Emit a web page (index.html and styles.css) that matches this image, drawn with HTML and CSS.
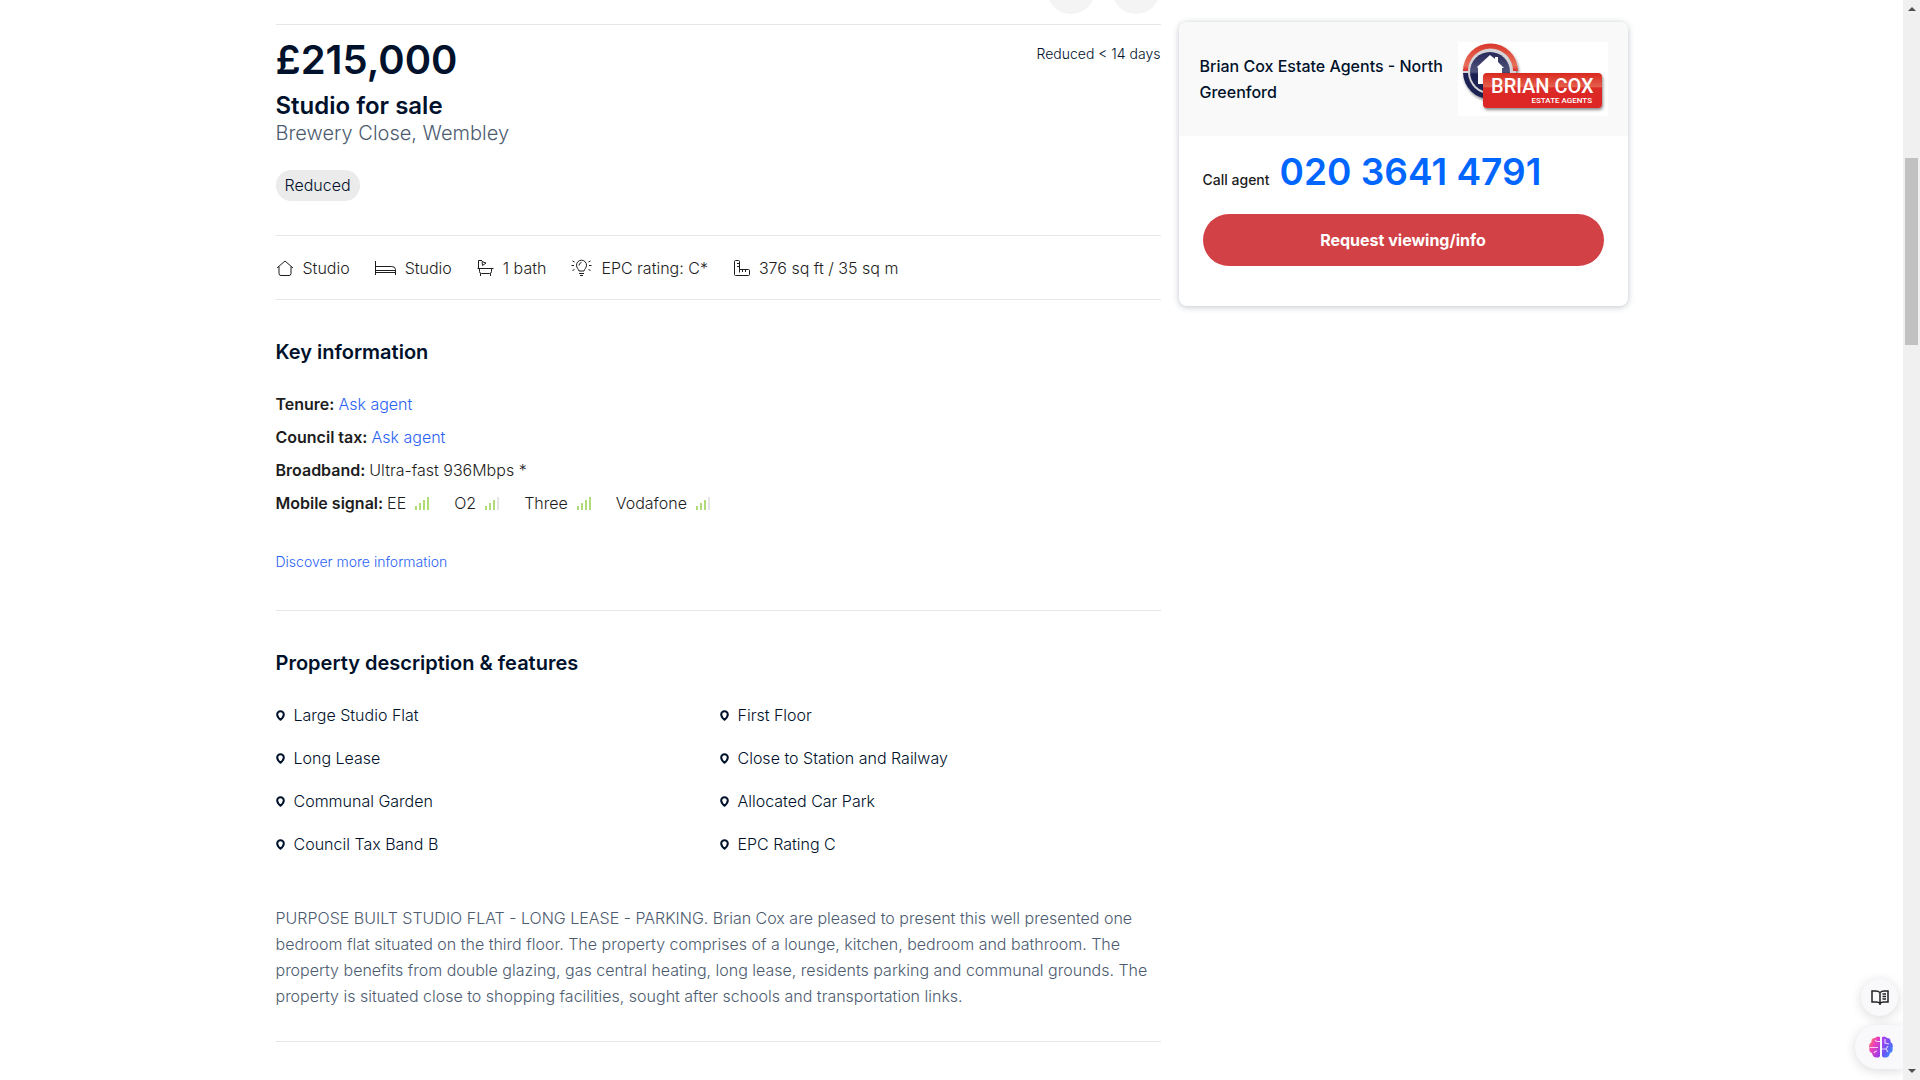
FILE: index.html
```html
<!DOCTYPE html>
<html lang="en">
<head>
<meta charset="utf-8">
<meta name="viewport" content="width=device-width, initial-scale=1">
<title>Studio for sale, Brewery Close, Wembley</title>
<link rel="stylesheet" href="styles.css">
</head>
<body>
<svg class="defs" aria-hidden="true">
  <symbol id="pin" viewBox="0 0 9 11"><path d="M4.500 1.200C2.600 1.200 1.200 2.600 1.200 4.400c0 2 1.700 3.900 3.300 5.300 1.600-1.400 3.300-3.300 3.300-5.300C7.800 2.600 6.400 1.200 4.500 1.200z" fill="none" stroke="currentColor" stroke-width="2" stroke-linejoin="round"/></symbol>
  <symbol id="signal-full" viewBox="0 0 15 13"><path d="M0 9h2v4H0zM4 6h2v7H4zM8 3h2v10H8zM12 0h2v13h-2z" fill="#b0dc78"/></symbol>
  <symbol id="signal-three" viewBox="0 0 15 13"><path d="M0 9h2v4H0zM4 6h2v7H4zM8 3h2v10H8z" fill="#b0dc78"/><path d="M12 0h2v13h-2z" fill="#e2e4e6"/></symbol>
</svg>
<div class="page">
  <div class="layout">
    <main class="listing">
      <div class="actions">
        <button class="round" type="button" aria-label="Share"></button>
        <button class="round" type="button" aria-label="Save"></button>
      </div>
      <header class="summary">
        <div>
          <p class="price">£215,000</p>
          <h1 class="title">Studio for sale</h1>
          <p class="address">Brewery Close, Wembley</p>
          <span class="pill">Reduced</span>
        </div>
        <p class="when">Reduced &lt; 14 days</p>
      </header>
      <ul class="facts">
        <li><svg width="18" height="18" viewBox="0 0 18 18"><path d="M1 9l8-7 8 7M3 7.500v7q0 2 2 2h8q2 0 2-2v-7"/></svg>Studio</li>
        <li><svg width="21" height="18" viewBox="0 0 21 18"><path d="M.500 2v14M.500 7.500h16q4 0 4 3v5.500M.500 11.500h20M.500 13.500h20"/></svg>Studio</li>
        <li><svg width="17" height="18" viewBox="0 0 17 18"><path d="M.500 9.500h16M1.500 9.500v-8h3.500M5 2.500l4 1.500-3.500 2.500zM2.500 9.500v3q0 2 2 2h8q2 0 2-2v-3M3.500 14.500V17M13.500 14.500V17"/></svg>1 bath</li>
        <li><svg width="21" height="18" viewBox="0 0 21 18"><path d="M8 12C7.500 9.800 5.500 9 5.500 6.200a5 5 0 0 1 10 0C15.500 9 13.500 9.800 13 12zM8 14.500h5M9 16.500h3M8 6.500q0-2.500 2.500-3M1.500 2l2 1M.500 6.500h2.500M1.500 11.500l2-1M19.500 2l-2 1M20.500 6.500H18M19.500 11.500l-2-1"/></svg>EPC rating: C*</li>
        <li><svg width="17" height="18" viewBox="0 0 17 18"><path d="M1.500 2.500q0-1 1-1h3q1 0 1 1v8h9q1 0 1 1v4q0 1-1 1h-13q-1 0-1-1zM6.500 4.500H4M6.500 7.500H4M6.500 10.500v3M9.500 10.500V13M12.500 10.500V13"/></svg>376 sq ft / 35 sq m</li>
      </ul>
      <section class="block info">
        <h2>Key information</h2>
        <dl>
          <div><dt>Tenure:</dt><dd><a href="#agent">Ask agent</a></dd></div>
          <div><dt>Council tax:</dt><dd><a href="#agent">Ask agent</a></dd></div>
          <div><dt>Broadband:</dt><dd>Ultra-fast 936Mbps *</dd></div>
          <div><dt>Mobile signal:</dt><dd class="signals">
            <span>EE<svg width="15" height="13"><use href="#signal-full"/></svg></span>
            <span>O2<svg width="15" height="13"><use href="#signal-three"/></svg></span>
            <span>Three<svg width="15" height="13"><use href="#signal-full"/></svg></span>
            <span>Vodafone<svg width="15" height="13"><use href="#signal-three"/></svg></span>
          </dd></div>
        </dl>
        <a class="more" href="#more">Discover more information</a>
      </section>
      <section class="block">
        <h2>Property description &amp; features</h2>
        <ul class="features">
          <li><svg width="9" height="11"><use href="#pin"/></svg>Large Studio Flat</li>
          <li><svg width="9" height="11"><use href="#pin"/></svg>First Floor</li>
          <li><svg width="9" height="11"><use href="#pin"/></svg>Long Lease</li>
          <li><svg width="9" height="11"><use href="#pin"/></svg>Close to Station and Railway</li>
          <li><svg width="9" height="11"><use href="#pin"/></svg>Communal Garden</li>
          <li><svg width="9" height="11"><use href="#pin"/></svg>Allocated Car Park</li>
          <li><svg width="9" height="11"><use href="#pin"/></svg>Council Tax Band B</li>
          <li><svg width="9" height="11"><use href="#pin"/></svg>EPC Rating C</li>
        </ul>
        <p class="description">PURPOSE BUILT STUDIO FLAT - LONG LEASE - PARKING. Brian Cox are pleased to present this well presented one bedroom flat situated on the third floor. The property comprises of a lounge, kitchen, bedroom and bathroom. The property benefits from double glazing, gas central heating, long lease, residents parking and communal grounds. The property is situated close to shopping facilities, sought after schools and transportation links.</p>
      </section>
    </main>
    <aside class="agent" id="agent">
      <div class="agent-head">
        <h2>Brian Cox Estate Agents - North Greenford</h2>
        <svg class="logo" width="150" height="74" viewBox="0 0 150 74" role="img" aria-label="Brian Cox Estate Agents">
          <defs>
            <linearGradient id="plate" x1="0" y1="0" x2="0" y2="1"><stop offset="0" stop-color="#d9281f"/><stop offset=".4" stop-color="#e4604c"/><stop offset=".42" stop-color="#dc2a28"/><stop offset="1" stop-color="#dd2528"/></linearGradient>
            <linearGradient id="ring" x1="0" y1="0" x2="0" y2="1"><stop offset="0" stop-color="#d9382c"/><stop offset=".8" stop-color="#e8705a"/><stop offset="1" stop-color="#dc2a28"/></linearGradient>
            <linearGradient id="disc" x1="0" y1="0" x2="0" y2="1"><stop offset="0" stop-color="#262a58"/><stop offset=".5" stop-color="#50547c"/><stop offset=".55" stop-color="#1c2252"/><stop offset="1" stop-color="#1c2252"/></linearGradient>
            <filter id="shade" x="-10%" y="-10%" width="125%" height="135%"><feDropShadow dx="1" dy="2" stdDeviation="1.500" flood-opacity=".45"/></filter>
          </defs>
          <path d="M0 0h150v74H0z" fill="#fff"/>
          <g filter="url(#shade)">
            <circle cx="32" cy="30" r="26" fill="#d4d4d8"/>
            <path d="M5 29a27 27 0 0 1 55 0h-5a22 22 0 0 0-45 0z" fill="url(#ring)"/>
            <path d="M5 31a27 27 0 0 0 27 26v-5a22 22 0 0 1-22-21z" fill="#1c2252"/>
            <circle cx="32" cy="30" r="20" fill="url(#disc)"/>
          </g>
          <path d="M19 25l13-12 5 4v-2h3v5l6 6h-2v16H20V26z" fill="#fff"/>
          <rect x="25" y="31" width="119" height="35" rx="4" fill="url(#plate)" filter="url(#shade)"/>
          <text class="logo-name" x="33" y="51">BRIAN COX</text>
          <text class="logo-sub" x="134" y="61" text-anchor="end">ESTATE AGENTS</text>
        </svg>
      </div>
      <div class="agent-body">
        <p class="call"><span>Call agent</span> <a href="tel:02036414791">020 3641 4791</a></p>
        <button class="request" type="button">Request viewing/info</button>
      </div>
    </aside>
  </div>
</div>
<div class="floating">
  <button class="reader" type="button" aria-label="Reader"><svg width="18" height="16" viewBox="0 0 18 16" fill="none" stroke="#222" stroke-width="1.500"><path d="M9 2.500Q7 1 5 1H1v11h4.500q2 0 3.500 1.500Q10.500 12 12.500 12H17V1h-4Q11 1 9 2.500zV15M11.500 4H15M11.500 6.500H15M11.500 9H15"/></svg></button>
  <button class="brain" type="button" aria-label="Assistant"><svg width="24" height="22" viewBox="0 0 24 22">
    <defs><linearGradient id="bl" x1="0" y1="0" x2="1" y2="1"><stop offset="0" stop-color="#ff9a2e"/><stop offset=".4" stop-color="#f040b8"/><stop offset="1" stop-color="#8a3cf4"/></linearGradient><linearGradient id="br" x1="0" y1="0" x2="1" y2="1"><stop offset="0" stop-color="#b83cf0"/><stop offset=".5" stop-color="#6a55f5"/><stop offset="1" stop-color="#22a8ff"/></linearGradient></defs>
    <path d="M11 1Q8-.500 6 2 2 2 2.500 6-1 8 .500 12-.500 16 3 17q1 5 5 4.500Q10 22 11 20z" fill="url(#bl)"/>
    <path d="M13 1q3-1.500 5 1 4 0 3.500 4 3.500 2 2 6 1 4-2.500 5-1 5-5 4.500Q14 22 13 20z" fill="url(#br)"/>
    <path d="M11 5.500H8Q7 5.500 6 4M1 11.500h8M5 17q1-2 3-2M16 3v4l4 1M13 13h4l2-3M17 13l2 3" fill="none" stroke="#fff" stroke-opacity=".75" stroke-width="1.200"/></svg></button>
</div>
<div class="scrollbar" aria-hidden="true"><i class="arrow up"></i><i class="thumb"></i><i class="arrow down"></i></div>
</body>
</html>
```
FILE: styles.css
```css
* { box-sizing: border-box; margin: 0; padding: 0; }
html, body { height: 100%; overflow: hidden; }
body {
  font: 300 16px/26px Inter, "Open Sans", sans-serif;
  color: #1d1d1d;
  background: #fff;
}
ul { list-style: none; }
a { color: #2b63f5; text-decoration: none; }
button { border: 0; font: inherit; cursor: pointer; }
.defs { position: absolute; width: 0; height: 0; }
.page { padding-right: 17px; }
.layout {
  display: grid;
  grid-template-columns: minmax(0, 1fr) 449px;
  gap: 18px;
  align-items: start;
  max-width: 1352px;
  margin: 0 auto;
}
.actions {
  display: flex;
  justify-content: flex-end;
  align-items: flex-end;
  gap: 17px;
  height: 24px;
  padding: 0 1px 10px 0;
  overflow: hidden;
}
.round { flex: none; width: 48px; height: 48px; border-radius: 50%; background: #f4f4f4; }
.summary {
  display: flex;
  justify-content: space-between;
  border-top: 1px solid #e5e6e8;
  padding: 11px 0 34px;
  color: #00112b;
}
.price { font-size: 40px; line-height: 48px; font-weight: 600; }
.title { font-size: 24px; line-height: 30px; font-weight: 600; margin-top: 7px; }
.address { font-size: 20px; line-height: 24px; color: #4d5b70; }
.pill {
  display: inline-block;
  margin-top: 25px;
  padding: 0 9px;
  border-radius: 16px;
  background: #ebebeb;
  line-height: 31px;
}
.when { font-size: 14px; line-height: 20px; margin-top: 8px; }
.facts {
  display: flex;
  gap: 25px;
  padding: 19px 0 18px;
  border-top: 1px solid #e5e6e8;
  border-bottom: 1px solid #e5e6e8;
}
.facts li { display: flex; align-items: center; gap: 9px; }
.facts svg { fill: none; stroke: #1d1d1d; stroke-width: 1; stroke-linejoin: round; }
.block { padding: 38px 0 32px; border-bottom: 1px solid #e5e6e8; }
.info { padding-bottom: 36px; }
.block h2 { font-size: 20px; line-height: 28px; font-weight: 600; color: #00112b; }
dl { margin-top: 22px; }
dl > div { display: flex; gap: 4px; line-height: 33px; }
dt { font-weight: 600; }
.signals { display: flex; gap: 24px; }
.signals span { display: flex; align-items: center; gap: 9px; }
.more { display: block; margin-top: 30px; font-size: 14px; line-height: 24px; }
.features {
  display: grid;
  grid-template-columns: 1fr 1fr;
  gap: 17px 3px;
  margin-top: 25px;
  color: #00112b;
}
.features li { display: flex; align-items: center; gap: 9px; }
.description { margin-top: 48px; color: #4d5b70; }
.agent {
  margin-top: 22px;
  border-radius: 8px;
  background: #fff;
  box-shadow: 0 1px 6px rgba(40, 60, 80, .3);
  overflow: hidden;
}
.agent-head {
  display: flex;
  align-items: center;
  justify-content: space-between;
  padding: 20px 20px 20px 21px;
  background: #f9f9f9;
}
.agent-head h2 { flex: 1; font-size: 16px; line-height: 26px; font-weight: 500; color: #00112b; }
.logo { flex: none; }
.logo-name { font: 500 20px Roboto, sans-serif; fill: #fff; }
.logo-sub { font: 500 8px Roboto, sans-serif; fill: #fff; }
.agent-body { padding: 12px 24px 40px; }
.call { display: flex; align-items: baseline; gap: 10px; font-size: 14px; font-weight: 500; }
.call a { font-size: 37px; line-height: 48px; font-weight: 600; color: #06f; }
.request {
  width: 100%;
  height: 52px;
  margin-top: 18px;
  border-radius: 26px;
  background: #d24145;
  color: #fff;
  font-weight: 700;
}
.floating {
  position: fixed;
  right: 17px;
  bottom: 11px;
  display: flex;
  flex-direction: column;
  align-items: flex-end;
  gap: 9px;
}
.floating button {
  display: flex;
  align-items: center;
  background: #f9f9fb;
  box-shadow: 0 2px 12px rgba(0, 0, 0, .15);
}
.reader { justify-content: center; width: 37px; height: 37px; margin-right: 5px; border-radius: 50%; }
.brain { width: 48px; height: 44px; padding-left: 14px; border-radius: 22px 0 0 22px; }
.scrollbar {
  position: fixed;
  inset: 0 0 0 auto;
  width: 17px;
  background: #f0f0f0;
}
.thumb { position: absolute; top: 158px; left: 2px; right: 2px; height: 187px; background: #c1c1c1; }
.arrow { position: absolute; left: 5px; border: 4px solid transparent; border-top-width: 0; border-bottom: 4px solid #505050; }
.up { top: 7px; }
.down { bottom: 7px; transform: rotate(180deg); }
```
